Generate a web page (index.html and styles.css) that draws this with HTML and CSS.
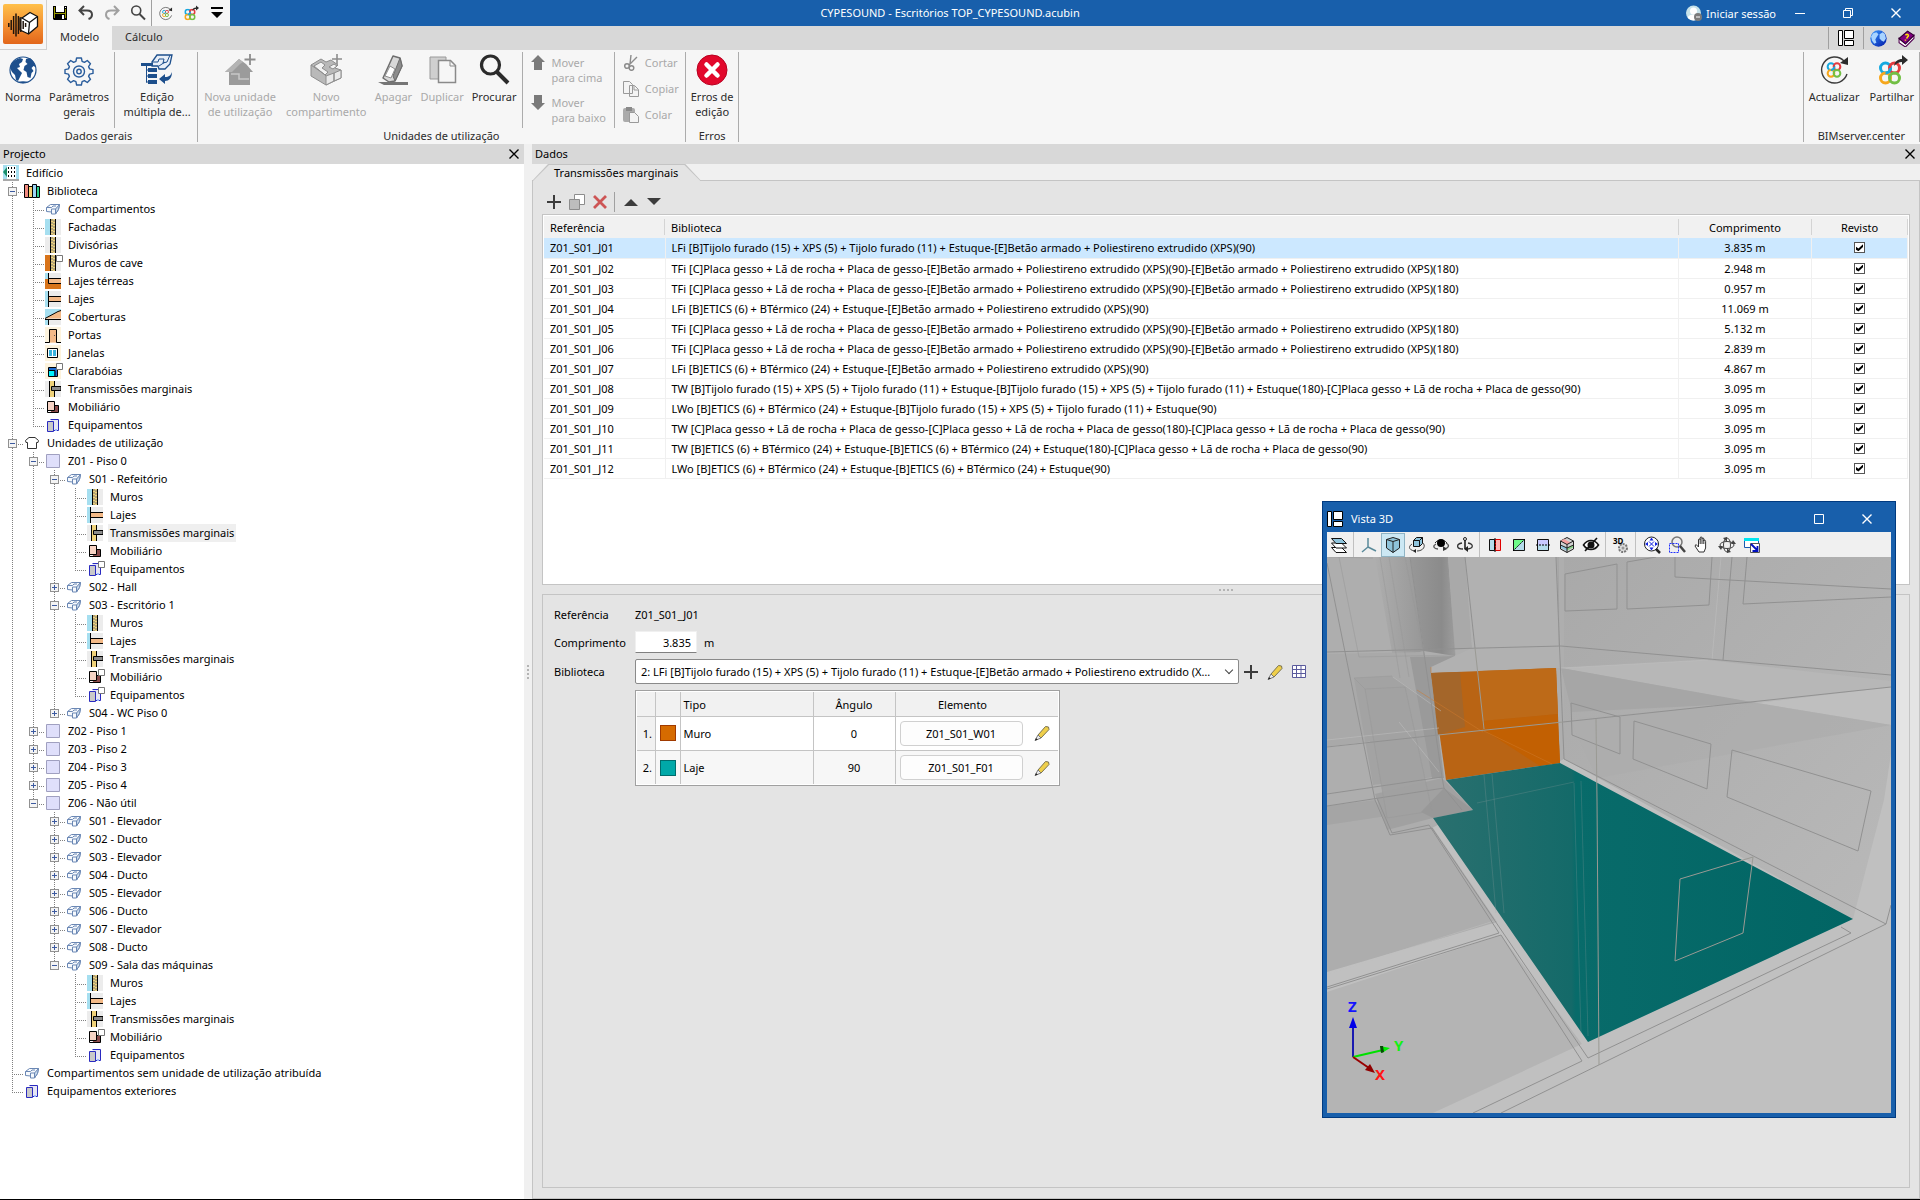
FILE: index.html
```html
<!DOCTYPE html>
<html lang="pt">
<head>
    <meta charset="UTF-8">
    <meta name="viewport" content="width=device-width, initial-scale=1.0">
    <title>CYPESOUND - Escritórios TOP_CYPESOUND.acubin</title>
    <link rel="stylesheet" href="styles.css">
</head>
<body>
    <!-- Icon sprite -->
    <svg class="sprite" aria-hidden="true">
        <defs>
            <linearGradient id="g-logo" x1="0" y1="0" x2="0" y2="1">
                <stop offset="0" stop-color="#ffc04a"/><stop offset=".5" stop-color="#f59333"/><stop offset="1" stop-color="#e2661a"/>
            </linearGradient>
            <linearGradient id="g-globe" x1="0" y1="0" x2="1" y2="1">
                <stop offset="0" stop-color="#3a9bff"/><stop offset="1" stop-color="#0018a8"/>
            </linearGradient>
        </defs>
        <symbol id="i-logo" viewBox="0 0 40 40">
            <rect width="40" height="40" rx="2" fill="url(#g-logo)"/>
            <path d="M19 14L27 8.500 34.500 12.500V22.500L25.500 30 17 26V14z" fill="#fff" stroke="#111" stroke-width="1.300" stroke-linejoin="round"/>
            <path d="M19 14l7.500 4.500 8-6M26.500 18.500l-1 11" fill="none" stroke="#111" stroke-width="1.300"/>
            <path d="M5.800 19v4M8.200 16v10M10.600 12v18M13 9.500v23M15.400 12v18M17.800 15v13M20.200 17v8M22.600 19v4" stroke="#20140c" stroke-width="1.500"/>
        </symbol>
        <symbol id="i-save" viewBox="0 0 14 14">
            <path d="M0 0h14v14H1l-1-1z" fill="#000"/><path d="M1 1h1v11H1zM12 3h1v9h-1zM2 7h10v1H2z" fill="#9a9a00"/>
            <path d="M3 0h8v6H3z" fill="#fff"/><path d="M12 1h1v1h-1z" fill="#fff"/><path d="M9 9h2v4H9z" fill="#fff"/>
        </symbol>
        <symbol id="i-undo" viewBox="0 0 16 16">
            <path d="M6 1L1.500 5.500 6 10M2 5.500h7c3.500 0 5 2 5 4.200 0 2-1.300 3.600-3.500 4.300" fill="none" stroke="currentColor" stroke-width="2"/>
        </symbol>
        <symbol id="i-search" viewBox="0 0 32 32">
            <circle cx="12.500" cy="11" r="9" fill="none" stroke="currentColor" stroke-width="3.200"/>
            <path d="M19 18l11 11" stroke="currentColor" stroke-width="4"/>
        </symbol>
        <symbol id="i-rings" viewBox="0 0 24 24">
            <g fill="none" stroke-width="3"><circle cx="7.500" cy="7" r="5" stroke="#16a9e0"/><circle cx="16.500" cy="7" r="5" stroke="#e23b3f"/>
            <circle cx="7.500" cy="17" r="5" stroke="#f6a71c"/><circle cx="16.500" cy="17" r="5" stroke="#72bf44"/>
            <path d="M7.500 12a5 5 0 0 0 5-5" stroke="#16a9e0"/></g>
        </symbol>
        <symbol id="i-update" viewBox="0 0 32 32">
            <path d="M29 20A13 13 0 1 1 26 7" fill="none" stroke="#3a3a3a" stroke-width="1.400"/>
            <path d="M22 9l8 2V3z" fill="#2b2b2b"/>
            <svg x="8" y="8" width="16" height="16"><use href="#i-rings"/></svg>
        </symbol>
        <symbol id="i-share" viewBox="0 0 32 32">
            <svg x="2" y="7" width="24" height="24"><use href="#i-rings"/></svg>
            <path d="M18 12c1-5 4-7 8-7V1l6 5-6 5V8c-3 0-5 1-8 4z" fill="#2b2b2b"/>
        </symbol>
        <symbol id="i-menu" viewBox="0 0 14 12"><path d="M1 0h12v2H1zM1 5h12l-6 6z" fill="#000"/></symbol>
        <symbol id="i-user" viewBox="0 0 16 16">
            <circle cx="7.500" cy="8" r="7.500" fill="#c6e2ea"/><circle cx="7.500" cy="6" r="3.500" fill="#fff"/><path d="M1.500 12.500c2-4 10-4 12 0-3 4-9 4-12 0z" fill="#fff"/>
            <circle cx="12" cy="12" r="4" fill="#7b7b7b"/><path d="M10 12h4" stroke="#fff"/>
        </symbol>
        <symbol id="i-min" viewBox="0 0 12 12"><path d="M1 6.500h10" stroke="currentColor"/></symbol>
        <symbol id="i-restore" viewBox="0 0 12 12"><path d="M1.500 3.500h7v7h-7zM3.500 3.500v-2h7v7h-2" fill="none" stroke="currentColor"/></symbol>
        <symbol id="i-max" viewBox="0 0 12 12"><path d="M1.500 1.500h9v9h-9z" fill="none" stroke="currentColor"/></symbol>
        <symbol id="i-close" viewBox="0 0 12 12"><path d="M1.500 1.500l9 9M10.500 1.500l-9 9" stroke="currentColor" stroke-width="1.400"/></symbol>
        <symbol id="i-layout" viewBox="0 0 16 16"><path d="M.5.500h4v15h-4zM6.500.500h9v8h-9zM6.500 10.500h9v5h-9z" fill="#fff" stroke="#000"/></symbol>
        <symbol id="i-globe" viewBox="0 0 16 16">
            <circle cx="8" cy="8" r="7.700" fill="url(#g-globe)"/>
            <path d="M1 6l2-3 3-1 2 2-2 3-1 2 1 3-2 1-2-3zM9 4l3-2 2 2 1 4-2 3-2-1-2-2z" fill="#a9d4ff"/>
        </symbol>
        <symbol id="i-book" viewBox="0 0 16 16">
            <path d="M1 8v4l6 4 8-8V5l-8 8z" fill="#fff" stroke="#500050"/><path d="M1 8l8-7 6 4-8 8z" fill="#800080" stroke="#300030"/>
            <path d="M7 5c2-2 4 0 2 1.500L8 8M7 9v1" fill="none" stroke="#ffe600" stroke-width="1.400"/>
        </symbol>
        <symbol id="i-world" viewBox="0 0 32 32">
            <circle cx="16" cy="16" r="13" fill="#fff" stroke="#1d4f8c" stroke-width="1.200"/>
            <path d="M4 11c2-4 5-6 9-7l3 1-1 3-3 2 1 3-3 1 3 3 2 2-2 4-2 4-2-1-1-5-3-3-2-4zM19 5l4-1c3 2 5 5 5.500 9l-2-1-2 2 2 3-2 2-1 5-3-1-1-5-3-2 1-4 3-2-2-2z" fill="#1d4f8c"/>
            <path d="M10 28c4-1 8-1 12 0-4 1.500-8 1.500-12 0z" fill="#1d4f8c"/>
        </symbol>
        <symbol id="i-gear" viewBox="0 0 32 32">
            <g fill="none" stroke="#2a5d9c" stroke-width="1.400">
                <path d="M13.600 4h4.800l.7 3.400 2.300 1 2.900-1.900 3.200 3.200-1.900 2.900 1 2.300 3.400.7v3.800l-3.400.7-1 2.300 1.900 2.900-3.200 3.200-2.900-1.900-2.300 1-.7 3.400h-4.800l-.7-3.400-2.300-1-2.900 1.900-3.200-3.200 1.900-2.900-1-2.300-3.400-.7v-3.800l3.400-.7 1-2.300-1.900-2.900 3.200-3.200 2.900 1.900 2.300-1z" stroke-linejoin="round"/>
                <circle cx="16" cy="17.500" r="5.500"/><circle cx="16" cy="17.500" r="2.200"/>
            </g>
        </symbol>
        <symbol id="i-multi" viewBox="0 0 32 32">
            <path d="M11 8l5-7h15l-2 9-5 5h-6l-1-3h-6z" fill="#e8eff8" stroke="#1d4f8c" stroke-width="1.300"/><path d="M11 8h6l1-3h5l-1 4 4-1 3-7M18 12l6-4" fill="none" stroke="#1d4f8c"/>
            <path d="M0 9h12v3H0zM7 14h9v4H7zM7 20h9v4H7zM7 26h9v4H7z" fill="#1d4f8c"/><path d="M5.500 12v16.500M5 16h3M5 22h3M5 28h3" fill="none" stroke="#1d4f8c"/>
            <path d="M18 25l6-5v3c4 0 6-2 7-5 0 6-3 9-7 9v3z" fill="#1d4f8c"/>
        </symbol>
        <symbol id="i-newunit" viewBox="0 0 32 32">
            <path d="M1 18L15 5l7 5 7 8h-3v13H5V18z" fill="#9b9b9b"/><path d="M1 18L15 5l4 3-3 2-8 8z" fill="#b4b4b4"/><path d="M7 20h8v5h10" fill="none" stroke="#c8c8c8" stroke-width="1.500"/><path d="M26 0v11M20.500 5.500h11" stroke="#8d8d8d" stroke-width="1.800"/>
        </symbol>
        <symbol id="i-newroom" viewBox="0 0 32 32">
            <g stroke="#8d8d8d" stroke-linejoin="round">
                <path d="M1 11l10-6 5 3 5-2 7 5-3 3 6 2v8l-15 7L1 22z" fill="#b9b9b9"/>
                <path d="M4 12l7-4 4 3-3 3 6 4-3 3zM19 13l5-3 3 2-4 3z" fill="#f2f2f2"/>
                <path d="M16 22l8-3v8l-8 4zM24 19l7-3v8l-7 3z" fill="#e9e9e9"/><path d="M1 11l13 9 2 2" fill="none"/><path d="M27 0v10M22 5h10" stroke-width="1.600"/>
            </g>
        </symbol>
        <symbol id="i-erase" viewBox="0 0 32 32">
            <path d="M16 2l7 2 2 8-7 15-6 1-6-4z" fill="#d9d9d9" stroke="#6e6e6e" stroke-width="1.500" stroke-linejoin="round"/><path d="M23 4l2 8-7 15-2-5z" fill="#8d8d8d" stroke="#6e6e6e"/>
            <path d="M8 22l5-10 5 3-4 9z" fill="#fff" stroke="#8d8d8d"/><path d="M1 28h30v3H7z" fill="#757575"/>
        </symbol>
        <symbol id="i-dup" viewBox="0 0 32 32">
            <path d="M4 3h16v22H4z" fill="#cfcfcf" stroke="#9a9a9a"/><path d="M12.500 6.500h12l5 5v17h-17z" fill="#f6f6f6" stroke="#8a8a8a" stroke-width="1.500"/><path d="M24 6v6h6" fill="none" stroke="#8a8a8a"/>
        </symbol>
        <symbol id="i-up" viewBox="0 0 14 16"><path d="M7 0l7 7h-3v8H3V7H0z" fill="#7a7a7a"/></symbol>
        <symbol id="i-down" viewBox="0 0 14 16"><path d="M7 15l7-7h-3V0H3v8H0z" fill="#7a7a7a"/></symbol>
        <symbol id="i-cut" viewBox="0 0 16 16">
            <path d="M8 0l-1 9M14 2L6 10" stroke="#8c8c8c" stroke-width="1.400"/><g fill="none" stroke="#8c8c8c" stroke-width="1.500"><circle cx="4" cy="11" r="2.300"/><circle cx="8.500" cy="13" r="2.300"/></g>
        </symbol>
        <symbol id="i-copy" viewBox="0 0 16 16"><path d="M.5.500h6l3 3v9h-9z M6.500 4.500h5l4 4v7h-9z" fill="#f4f4f4" stroke="#9a9a9a"/><path d="M11 5v4h4" fill="none" stroke="#9a9a9a"/></symbol>
        <symbol id="i-paste" viewBox="0 0 16 16"><rect y="1" width="12" height="14" rx="2" fill="#ababab"/><path d="M3 0h6v4H3z" fill="#8a8a8a"/><path d="M6.500 5.500h5l4 4v6h-9z" fill="#f4f4f4" stroke="#9a9a9a"/></symbol>
        <symbol id="i-error" viewBox="0 0 32 32"><circle cx="16" cy="16" r="15" fill="#e2082c" stroke="#b80020"/><path d="M10.500 10.500l11 11M21.500 10.500l-11 11" stroke="#fff" stroke-width="4.500" stroke-linecap="round"/></symbol>

        <!-- tree -->
        <symbol id="t-building" viewBox="0 0 16 16"><path d="M0 0h16v14H0z" fill="#a6dff0"/><path d="M0 14h16v2H0z" fill="#a9a9a9"/><path d="M4 1h9v13H4z" fill="#fff"/><path d="M5.500 2v12M8.500 2v12M11.500 2v12" stroke="#000" stroke-dasharray="2 2"/><path d="M4 2v10L0 7z" fill="#1a8f6a"/></symbol>
        <symbol id="t-books" viewBox="0 0 16 16"><g stroke="#000"><path d="M.5 1.500h4v13h-4z" fill="#f08a80"/><path d="M4.500 3.500h4v11h-4z" fill="#f7d070"/><path d="M8.500 1.500h4v13h-4z" fill="#9bd4f5"/><path d="M12.500 3.500h3v11h-3z" fill="#2ed08a"/></g></symbol>
        <symbol id="t-room" viewBox="0 0 16 16"><path d="M1.500 6.500l4-3h9l-1 5-3 4.500h-4V11l-5-.5z" fill="#f6f9fd" stroke="#6a87b4" stroke-linejoin="round"/><path d="M10.500 8l4-4.500-1 5-3 4.500z" fill="#c4d6ea" stroke="#6a87b4" stroke-linejoin="round"/><path d="M1.500 6.500h5l1.500-1.500h3M6.500 11V8h4" fill="none" stroke="#6a87b4"/></symbol>
        <symbol id="t-wall" viewBox="0 0 16 16"><path d="M0 0h16v16H0z" fill="#ececec"/><path d="M0 0h5v16H0z" fill="#a6dff0"/><path d="M5 0h6v16H5z" fill="#000"/><path d="M6 0h4v16H6z" fill="#efd27a"/><path d="M7 0v16M9 1v15" stroke="#777" stroke-dasharray="2 1"/></symbol>
        <symbol id="t-part" viewBox="0 0 16 16"><path d="M0 0h16v16H0z" fill="#ececec"/><path d="M5 0h6v16H5z" fill="#000"/><path d="M6 0h4v16H6z" fill="#efd27a"/><path d="M7 0v16M9 1v15" stroke="#777" stroke-dasharray="2 1"/></symbol>
        <symbol id="t-cave" viewBox="0 0 18 16"><path d="M0 0h16v16H0z" fill="#ececec"/><path d="M0 0h5v16H0z" fill="#d8741a"/><path d="M5 0h6v16H5z" fill="#000"/><path d="M6 0h4v16H6z" fill="#efd27a"/><path d="M7 0v16M9 1v15" stroke="#777" stroke-dasharray="2 1"/><path d="M11.500.500h6v6h-6z" fill="#fff" stroke="#777"/></symbol>
        <symbol id="t-ground" viewBox="0 0 16 16"><path d="M0 0h16v16H0z" fill="#d8741a"/><path d="M0 0h4v6H0z" fill="#a6dff0"/><path d="M4 0h12v6H4z" fill="#ececec"/><path d="M3.500 0v10.500H16M4 5.500h12" fill="none" stroke="#000"/><path d="M4 6h12v4H4z" fill="#f3b987"/></symbol>
        <symbol id="t-slab" viewBox="0 0 16 16"><path d="M0 0h16v16H0z" fill="#ececec"/><path d="M0 0h3v16H0z" fill="#a6dff0"/><path d="M3.500 0v16M4 5.500h12M4 10.500h12" stroke="#000"/><path d="M4 6h12v4H4z" fill="#f3b987"/></symbol>
        <symbol id="t-roof" viewBox="0 0 16 16"><path d="M0 0h16v16H0z" fill="#ececec"/><path d="M0 0h16v2L0 9.500V16h3v-6H0z" fill="#a6dff0"/><path d="M0 9.500L13 2.500l3-1v8z" fill="#f3b987"/><path d="M0 9.500L13 2.500l3-1M0 10.500h16M3.500 10v6" fill="none" stroke="#000"/></symbol>
        <symbol id="t-door" viewBox="0 0 16 16"><path d="M0 0h16v16H0z" fill="#fdf3dd"/><path d="M0 15.500h4.500v-13h7v13H16" fill="#f3b987" stroke="#000"/><path d="M9 8h1v1H9z" fill="#555"/></symbol>
        <symbol id="t-window" viewBox="0 0 16 16"><path d="M0 0h16v16H0z" fill="#fdf3dd"/><path d="M2.500 3.500h10v9h-10z" fill="#fff" stroke="#000"/><path d="M4 5h3v6H4zM8 5h3v6H8z" fill="#3cb4dc"/></symbol>
        <symbol id="t-sky" viewBox="0 0 18 16"><path d="M0 0h16v16H0z" fill="#fdf3dd"/><path d="M3.500 4.500h9v9h-9z" fill="#1b6ad0" stroke="#000"/><path d="M4 8h5v5H4z" fill="#00f2ff"/><path d="M3 7.500h7v6" fill="none" stroke="#000"/><path d="M11.500.500h6v6h-6z" fill="#fff" stroke="#777"/></symbol>
        <symbol id="t-joint" viewBox="0 0 16 16"><path d="M0 0h16v16H0z" fill="#ececec"/><path d="M5 0h4v16H5z" fill="#efd27a"/><path d="M4.500 0v16M9.500 0v16" stroke="#000"/><path d="M6.500 5.500H16v4H6.500z" fill="#8c8c8c" stroke="#000"/></symbol>
        <symbol id="t-furn" viewBox="0 0 18 16"><path d="M8.500 6.500h5v7h-8" fill="#8a4a4a" stroke="#000"/><path d="M2.500 2.500h7v9h-7z" fill="#f7d3c4" stroke="#000"/><path d="M2.500 11v2.500h4" fill="none" stroke="#000"/></symbol>
        <symbol id="t-furn2" viewBox="0 0 18 16"><use href="#t-furn" width="18" height="16"/><path d="M11.500.500h6v6h-6z" fill="#fff" stroke="#777"/></symbol>
        <symbol id="t-equip" viewBox="0 0 18 16"><path d="M5.500 2.500h8v11h-5" fill="#e6e6f4" stroke="#2a2ac0"/><path d="M2.500 4.500h6v10h-6z" fill="#c9c9c9" stroke="#2a2ac0"/><path d="M10 12h2v2h-2z" fill="#9ab8ff"/></symbol>
        <symbol id="t-equip2" viewBox="0 0 18 16"><use href="#t-equip" width="18" height="16"/><path d="M11.500.500h6v6h-6z" fill="#fff" stroke="#777"/></symbol>
        <symbol id="t-house" viewBox="0 0 16 16"><path d="M1.500 5.500L5 2.500h6l3.500 3-.5 2h-1.500v6h-9v-6H2z" fill="#fff" stroke="#333"/></symbol>
        <symbol id="t-zone" viewBox="0 0 16 16"><path d="M1.500 1.500h13v13h-13z" fill="#dfdffb" stroke="#a0a0c0"/></symbol>

        <!-- data toolbar -->
        <symbol id="i-plus" viewBox="0 0 16 16"><path d="M8 1v14M1 8h14" stroke="#3c3c3c" stroke-width="2"/></symbol>
        <symbol id="i-clone" viewBox="0 0 16 16"><path d="M5.500.500h10v10h-10z" fill="#fff" stroke="#8c8c8c"/><path d="M.5 5.500h10v10H.5z" fill="#bdbdbd" stroke="#8c8c8c"/></symbol>
        <symbol id="i-del" viewBox="0 0 16 16"><path d="M2 2l12 12M14 2L2 14" stroke="#cd5555" stroke-width="2.800"/></symbol>
        <symbol id="i-tri-up" viewBox="0 0 14 8"><path d="M0 8l7-7 7 7z" fill="#3c3c3c"/></symbol>
        <symbol id="i-tri-down" viewBox="0 0 14 8"><path d="M0 0l7 7 7-7z" fill="#3c3c3c"/></symbol>
        <symbol id="i-pencil" viewBox="0 0 16 16"><path d="M4 10l7.500-8.500 3 .5.500 2.500L7 13z" fill="#efcf4a" stroke="#7a7350"/><path d="M4 10L1 15.500 7 13z" fill="#eee" stroke="#777"/><path d="M1 15.500l1-2.500 1.800 1.800z" fill="#222"/></symbol>
        <symbol id="i-grid" viewBox="0 0 16 16"><path d="M1.500 1.500h13v12h-13zM1.500 5.500h13M1.500 9.500h13M5.500 1.500v12M10 1.500v12" fill="#fff" stroke="#5a5a9c"/></symbol>

        <!-- 3D view toolbar -->
        <symbol id="v-layers" viewBox="0 0 18 18"><g stroke="#111" stroke-linejoin="round"><path d="M1.500 11.500h10l5 5H6z" fill="#fff"/><path d="M1.500 7h10l5 5H6z" fill="#fff"/><path d="M1.500 2.500h10l5 5H6z" fill="#8fc4dc"/></g></symbol>
        <symbol id="v-axes" viewBox="0 0 18 18"><path d="M8 2v9l-6 5M8 11l8 4" fill="none" stroke="#5a8a9a" stroke-width="1.500"/></symbol>
        <symbol id="v-cube" viewBox="0 0 18 18"><path d="M2.500 3.500L9 1.500l6.500 2v8.500L9 16.500 2.500 12z" fill="#8ec3da" stroke="#222"/><path d="M2.500 3.500L9 5.500l6.500-2M9 5.500v11" fill="none" stroke="#222"/></symbol>
        <symbol id="v-orbit" viewBox="0 0 18 18"><path d="M4 8c-5 3-2 7 4 7M14 6c5 4 1 9-5 9" fill="none" stroke="#444"/><path d="M5.500 4.500l3-3h6v6l-3 3h-6z" fill="#8fc4dc" stroke="#111"/><path d="M5.500 4.500h6v6M11.500 4.500l3-3" fill="none" stroke="#111"/><path d="M8 13v4l-3-2z" fill="#222"/></symbol>
        <symbol id="v-eye" viewBox="0 0 18 18"><path d="M3 7c3-4 9-4 12 0" fill="none" stroke="#222"/><circle cx="9" cy="7" r="4" fill="#000"/><path d="M4 8c-4 2-2 5 2 5M14 7c4 2 3 5-2 6" fill="none" stroke="#555" stroke-width="1.300"/><path d="M11 10l4 3-4 2z" fill="#333"/></symbol>
        <symbol id="v-turn" viewBox="0 0 18 18"><path d="M9 4v9" stroke="#222" stroke-width="1.600"/><circle cx="9" cy="3" r="1.500" fill="none" stroke="#222"/><path d="M6 7c-6 1-6 6 1 6M12 7c6 1 6 6-2 6" fill="none" stroke="#333" stroke-width="1.300"/><path d="M12 10v6l-4-3z" fill="#222"/></symbol>
        <symbol id="v-clipx" viewBox="0 0 18 18"><path d="M3.500 3.500h5v11h-5z" fill="#b5dcec" stroke="#111"/><path d="M9.500 3.500h5v11h-5z" fill="#ffb4b4" stroke="#e00000"/><path d="M9 2v14" stroke="#000" stroke-dasharray="2 1"/></symbol>
        <symbol id="v-clipy" viewBox="0 0 18 18"><path d="M3 3h12v12H3z" fill="#6dfc8a"/><path d="M15 3v12H3z" fill="#b5dcec"/><path d="M3.500 3.500h11v11h-11z" fill="none" stroke="#111"/><path d="M3 15L15 3" stroke="#000" stroke-dasharray="2 1"/></symbol>
        <symbol id="v-clipz" viewBox="0 0 18 18"><path d="M3.500 3.500h11v11h-11z" fill="#c9c9ff" stroke="#111"/><path d="M4 9h10v5H4z" fill="#b5dcec"/><path d="M2 9h14" stroke="#000" stroke-dasharray="2 1"/></symbol>
        <symbol id="v-block" viewBox="0 0 18 18"><path d="M2.500 5L9 1.500 15.500 5v8L9 16.500 2.500 13z" fill="#d2d2d2" stroke="#222"/><path d="M6 3l6.500 3.500L9 8.500 2.500 5z" fill="#f5a0a0"/><path d="M9 12l6-3v2.500l-6 3z" fill="#85d085"/><path d="M3 9l6 3v3L3 12z" fill="#8fc4dc"/><path d="M9 8.500v8M2.500 5L9 8.500 15.500 5M2.500 9L9 12l6.500-3" fill="none" stroke="#222"/></symbol>
        <symbol id="v-hide" viewBox="0 0 18 18"><path d="M1.500 9c4-6 11-6 15 0-4 6-11 6-15 0z" fill="#fff" stroke="#111" stroke-width="1.600"/><circle cx="9" cy="9" r="3.500" fill="#111"/><path d="M3 15L15 2" stroke="#111" stroke-width="1.600"/></symbol>
        <symbol id="v-extents" viewBox="0 0 18 18"><circle cx="8.500" cy="8" r="7" fill="#fff" stroke="#222"/><path d="M13 13l4 4" stroke="#222" stroke-width="2.500"/><path d="M8.500 1.500l2 3h-4zM8.500 14.500l2-3h-4zM2 8l3-2v4zM15 8l-3-2v4z" fill="#1020e0"/><path d="M6 5.500l5 5M11 5.500l-5 5" stroke="#1020e0"/></symbol>
        <symbol id="v-zoom" viewBox="0 0 18 18"><circle cx="9" cy="6" r="5" fill="#eee" stroke="#777" stroke-width="1.500"/><path d="M12 10l5 6" stroke="#444" stroke-width="2.500"/><path d="M1.500 7.500h9v9h-9z" fill="none" stroke="#2030ff" stroke-dasharray="2 1"/></symbol>
        <symbol id="v-pan" viewBox="0 0 18 18"><path d="M6 16l-4-6 1-1.500L5.500 11V4c0-1.500 1.700-1.500 1.700 0V2c0-1.500 1.800-1.500 1.800 0v1c0-1.500 1.800-1.500 1.800 0v2c0-1.500 1.800-1.200 1.800.3V12l-1.600 4z" fill="#fff" stroke="#333"/><path d="M7.200 4v4M9 3v5M10.800 4v4" stroke="#333"/></symbol>
        <symbol id="v-move" viewBox="0 0 18 18"><g fill="none" stroke="#444"><ellipse cx="9" cy="9" rx="3.500" ry="7"/><ellipse cx="9" cy="9" rx="7" ry="3.500"/></g><path d="M5 2l4-1v5zM13 16l-4 1v-5zM0 10h5l-2 4zM18 8h-5l2-4z" fill="#444"/></symbol>
        <symbol id="v-window" viewBox="0 0 18 18"><path d="M1.500 2.500h14v9h-14z" fill="#fff" stroke="#1b5ab0"/><path d="M1 2h15v3H1z" fill="#00e5f0"/><path d="M7.500 7.500h9v9h-9z" fill="#fff" stroke="#555"/><path d="M8 8l6 6M14.500 10v5h-5" fill="none" stroke="#0010c0" stroke-width="1.800"/></symbol>
    </svg>

    <header class="top">
        <button class="logo" aria-label="CYPESOUND"><svg width="40" height="40"><use href="#i-logo"/></svg></button>
        <div class="titlebar">
            <div class="quick">
                <button aria-label="Guardar"><svg width="14" height="14"><use href="#i-save"/></svg></button>
                <button aria-label="Desfazer"><svg width="16" height="16"><use href="#i-undo"/></svg></button>
                <button aria-label="Refazer" class="redo" disabled><svg width="16" height="16"><use href="#i-undo"/></svg></button>
                <button aria-label="Procurar"><svg width="16" height="16"><use href="#i-search"/></svg></button>
                <span class="vline"></span>
                <button aria-label="Actualizar"><svg width="15" height="15"><use href="#i-update"/></svg></button>
                <button aria-label="Partilhar"><svg width="16" height="16"><use href="#i-share"/></svg></button>
                <button aria-label="Personalizar"><svg width="14" height="12"><use href="#i-menu"/></svg></button>
            </div>
            <h1 class="title">CYPESOUND - Escritórios TOP_CYPESOUND.acubin</h1>
            <button class="session"><svg width="16" height="16"><use href="#i-user"/></svg>Iniciar sessão</button>
            <div class="winbtns">
                <button aria-label="Minimizar"><svg width="12" height="12"><use href="#i-min"/></svg></button>
                <button aria-label="Restaurar"><svg width="12" height="12"><use href="#i-restore"/></svg></button>
                <button aria-label="Fechar"><svg width="12" height="12"><use href="#i-close"/></svg></button>
            </div>
        </div>
        <nav class="tabs">
            <a href="#" class="active">Modelo</a>
            <a href="#">Cálculo</a>
            <div class="tools">
                <button aria-label="Janelas"><svg width="16" height="16"><use href="#i-layout"/></svg></button>
                <button aria-label="Web"><svg width="17" height="17"><use href="#i-globe"/></svg></button>
                <button aria-label="Ajuda"><svg width="17" height="17"><use href="#i-book"/></svg></button>
            </div>
        </nav>
    </header>

    <section class="ribbon">
        <div class="group">
            <div class="items">
                <button class="big"><svg><use href="#i-world"/></svg>Norma</button>
                <button class="big"><svg><use href="#i-gear"/></svg>Parâmetros<br>gerais</button>
                <span class="rule"></span>
                <button class="big wide"><svg><use href="#i-multi"/></svg>Edição<br>múltipla de...</button>
            </div>
            <p>Dados gerais</p>
        </div>
        <div class="group units">
            <div class="items">
                <button class="big wide" disabled><svg><use href="#i-newunit"/></svg>Nova unidade<br>de utilização</button>
                <button class="big wide" disabled><svg><use href="#i-newroom"/></svg>Novo<br>compartimento</button>
                <button class="big" disabled><svg><use href="#i-erase"/></svg>Apagar</button>
                <button class="big" disabled><svg><use href="#i-dup"/></svg>Duplicar</button>
                <button class="big"><svg><use href="#i-search"/></svg>Procurar</button>
                <span class="rule"></span>
                <div class="stack">
                    <button class="small" disabled><svg width="14" height="16"><use href="#i-up"/></svg><span>Mover<br>para cima</span></button>
                    <button class="small" disabled><svg width="14" height="16"><use href="#i-down"/></svg><span>Mover<br>para baixo</span></button>
                </div>
                <span class="rule"></span>
                <div class="stack">
                    <button class="small" disabled><svg width="16" height="16"><use href="#i-cut"/></svg>Cortar</button>
                    <button class="small" disabled><svg width="16" height="16"><use href="#i-copy"/></svg>Copiar</button>
                    <button class="small" disabled><svg width="16" height="16"><use href="#i-paste"/></svg>Colar</button>
                </div>
            </div>
            <p>Unidades de utilização</p>
        </div>
        <div class="group roomy">
            <div class="items">
                <button class="big"><svg><use href="#i-error"/></svg>Erros de<br>edição</button>
            </div>
            <p>Erros</p>
        </div>
        <div class="group roomy last">
            <div class="items">
                <button class="big"><svg><use href="#i-update"/></svg>Actualizar</button>
                <button class="big"><svg><use href="#i-share"/></svg>Partilhar</button>
            </div>
            <p>BIMserver.center</p>
        </div>
    </section>

    <main class="work">
        <aside class="project">
            <div class="dock-head"><h2>Projecto</h2><button aria-label="Fechar"><svg width="12" height="12"><use href="#i-close"/></svg></button></div>
            <div class="tree" id="tree"></div>
        </aside>
        <div class="vsplit"><i></i><i></i><i></i><i></i></div>
        <section class="data">
            <div class="dock-head"><h2>Dados</h2><button aria-label="Fechar"><svg width="12" height="12"><use href="#i-close"/></svg></button></div>
            <div class="tabstrip"><span class="tab">Transmissões marginais</span></div>
            <div class="data-body">
                <div class="toolbar">
                    <button aria-label="Adicionar"><svg width="16" height="16"><use href="#i-plus"/></svg></button>
                    <button aria-label="Copiar"><svg width="16" height="16"><use href="#i-clone"/></svg></button>
                    <button aria-label="Apagar"><svg width="16" height="16"><use href="#i-del"/></svg></button>
                    <span class="vline"></span>
                    <button aria-label="Subir"><svg width="14" height="8"><use href="#i-tri-up"/></svg></button>
                    <button aria-label="Descer"><svg width="14" height="8"><use href="#i-tri-down"/></svg></button>
                </div>
                <div class="list">
                    <table>
                        <colgroup><col class="c-ref"><col><col class="c-len"><col class="c-rev"></colgroup>
                        <thead><tr><th>Referência</th><th>Biblioteca</th><th>Comprimento</th><th>Revisto</th></tr></thead>
                        <tbody id="joints"></tbody>
                    </table>
                </div>
                <div class="hsplit"><i></i><i></i><i></i><i></i></div>
                <form class="detail">
                    <span>Referência</span>
                    <div class="field">Z01_S01_J01</div>
                    <label for="length">Comprimento</label>
                    <div class="field"><input id="length" type="text" value="3.835"><span class="unit">m</span></div>
                    <label for="lib">Biblioteca</label>
                    <div class="field">
                        <span class="combo"><select id="lib"><option>2: LFi [B]Tijolo furado (15) + XPS (5) + Tijolo furado (11) + Estuque-[E]Betão armado + Poliestireno extrudido (XPS)(90)</option></select></span>
                        <button type="button" aria-label="Adicionar"><svg width="16" height="16"><use href="#i-plus"/></svg></button>
                        <button type="button" aria-label="Editar"><svg width="16" height="16"><use href="#i-pencil"/></svg></button>
                        <button type="button" aria-label="Tabela"><svg width="16" height="16"><use href="#i-grid"/></svg></button>
                    </div>
                    <div class="elements">
                        <table>
                            <thead><tr><th></th><th></th><th class="left">Tipo</th><th>Ângulo</th><th>Elemento</th></tr></thead>
                            <tbody>
                                <tr><td class="num">1.</td><td class="sw"><span class="swatch wall"></span></td><td class="type">Muro</td><td class="angle">0</td><td><div class="pick"><button type="button" class="elem">Z01_S01_W01</button><button type="button" aria-label="Editar"><svg width="16" height="16"><use href="#i-pencil"/></svg></button></div></td></tr>
                                <tr><td class="num">2.</td><td class="sw"><span class="swatch slab"></span></td><td class="type">Laje</td><td class="angle">90</td><td><div class="pick"><button type="button" class="elem">Z01_S01_F01</button><button type="button" aria-label="Editar"><svg width="16" height="16"><use href="#i-pencil"/></svg></button></div></td></tr>
                            </tbody>
                        </table>
                    </div>
                </form>
            </div>
        </section>
    </main>

    <!-- Floating 3D view -->
    <section class="view3d">
        <div class="view-title">
            <svg width="16" height="16"><use href="#i-layout"/></svg>
            <h2>Vista 3D</h2>
            <button aria-label="Maximizar"><svg width="12" height="12"><use href="#i-max"/></svg></button>
            <button aria-label="Fechar"><svg width="12" height="12"><use href="#i-close"/></svg></button>
        </div>
        <div class="view-tools">
            <button aria-label="Camadas"><svg><use href="#v-layers"/></svg></button>
            <span class="vline"></span>
            <button aria-label="Eixos"><svg><use href="#v-axes"/></svg></button>
            <button aria-label="Perspectiva" class="on"><svg><use href="#v-cube"/></svg></button>
            <button aria-label="Orbitar"><svg><use href="#v-orbit"/></svg></button>
            <button aria-label="Olhar"><svg><use href="#v-eye"/></svg></button>
            <button aria-label="Rodar"><svg><use href="#v-turn"/></svg></button>
            <span class="vline"></span>
            <button aria-label="Corte X"><svg><use href="#v-clipx"/></svg></button>
            <button aria-label="Corte Y"><svg><use href="#v-clipy"/></svg></button>
            <button aria-label="Corte Z"><svg><use href="#v-clipz"/></svg></button>
            <button aria-label="Caixa"><svg><use href="#v-block"/></svg></button>
            <button aria-label="Ocultar"><svg><use href="#v-hide"/></svg></button>
            <span class="vline"></span>
            <button aria-label="Opções 3D"><svg viewBox="0 0 18 18"><circle cx="11" cy="12" r="4" fill="#ddd" stroke="#777" stroke-width="2" stroke-dasharray="2 1"/><circle cx="11" cy="12" r="1.500" fill="#999"/><text class="tag" x="1" y="8">3D</text></svg></button>
            <span class="vline"></span>
            <button class="nav" aria-label="Ver tudo"><svg><use href="#v-extents"/></svg></button>
            <button class="nav" aria-label="Zoom"><svg><use href="#v-zoom"/></svg></button>
            <button class="nav" aria-label="Mover"><svg><use href="#v-pan"/></svg></button>
            <button class="nav" aria-label="Rotação"><svg><use href="#v-move"/></svg></button>
            <button class="nav" aria-label="Janela"><svg><use href="#v-window"/></svg></button>
        </div>
        <svg class="scene" viewBox="0 0 564 556" preserveAspectRatio="xMidYMid slice">
            <defs>
                <linearGradient id="g-back" x1="0" y1="0" x2="1" y2="1"><stop offset="0" stop-color="#a9a9a9"/><stop offset="1" stop-color="#b9b9b9"/></linearGradient>
                <linearGradient id="g-teal" x1="0" y1="0" x2="1" y2="0"><stop offset="0" stop-color="#2a706f"/><stop offset=".33" stop-color="#146a69"/><stop offset=".34" stop-color="#086b6a"/><stop offset="1" stop-color="#016564"/></linearGradient>
                <linearGradient id="g-dark" x1="0" y1="0" x2="1" y2="0"><stop offset="0" stop-color="#989898"/><stop offset=".7" stop-color="#8b8b8b"/><stop offset="1" stop-color="#9c9c9c"/></linearGradient>
                <linearGradient id="g-side" x1="0" y1="0" x2="1" y2="0"><stop offset="0" stop-color="#adadad"/><stop offset="1" stop-color="#979797"/></linearGradient>
            </defs>
            <rect width="564" height="556" fill="#c0c0c0"/>
            <path d="M0 0h237v202L105 271 0 300z" fill="#aeaeae"/>
            <path d="M237 0h327v197L557 243 526 362 237 202z" fill="url(#g-back)"/>
            <path d="M0 268L60 258 104 268 170 365 0 415z" fill="#adadad"/>
            <path d="M0 435L174 378 255 487 106 556H0z" fill="#b4b4b4"/>
            <path d="M0 249l48-6 12 16-60 9z" fill="#a5a5a5"/>
            <path d="M48 0h35l14 94-31 7z" fill="url(#g-side)"/>
            <path d="M83 0h38l7 99-31-5z" fill="url(#g-dark)"/>
            <path d="M121 0h17l7 91-17 2z" fill="#a9a9a9"/>
            <path d="M138 0h91l5 89-89 2z" fill="#b1b1b1"/>
            <path d="M0 97l97-2 7 21 4 63L0 190z" fill="#a9a9a9"/>
            <path d="M27 121l38-2 32 22 10 79-61 8z" fill="#a3a3a3"/>
            <path d="M83 100l45-1 2 18-26 0 13 104-12 0z" fill="#9a9a9a"/>
            <path d="M38 132l40-2 27 124-45 7z" fill="#a2a2a2"/>
            <path d="M48 237l67-16 31 32-40 8-46 12z" fill="#a1a1a1"/>
            <path d="M117 231l29 22-40 8-12-6z" fill="#989898"/>
            <path d="M145 91l89-2v22l-130 5v-6z" fill="#b1b1b1"/>
            <path d="M234 111L381 103 564 124v7L430 146z" fill="#b7b7b7"/>
            <path d="M234 111L430 146 245 155z" fill="#a6a6a6"/>
            <path d="M430 146L564 130V168z" fill="#bfbfbf"/>
            <path d="M243 162L430 146 564 168 270 221z" fill="#acacac" fill-opacity=".7"/>
            <path d="M104 116L229 111 233 206 119 223z" fill="#b96414"/>
            <path d="M104 116l29-1 5 55-27 8z" fill="#a4662a"/>
            <path d="M151 114L229 111 231 157 155 164z" fill="#bd6a18"/>
            <path d="M155 164l76-7 0 8-74 8z" fill="#c06207"/>
            <path d="M157 173L231 165 233 206 213 209z" fill="#c26002"/>
            <path d="M233 206L526 362 261 485 106 261 146 253 119 223z" fill="url(#g-teal)"/>
            <g fill="none" stroke="#c2c2c2" stroke-opacity=".5">
                <path d="M66 120l48 34M0 183l112-12M385 103L394 0M0 417l170-54M72 165l40 50M43 185L0 190M234 111L381 103"/>
            </g>
            <path d="M90 133L156 175M155 173L225 207M104 116L104 110" fill="none" stroke="#d07a2a" stroke-opacity=".5"/>
            <g fill="none" stroke="#919191">
                <path d="M0 95L234 89 564 118M0 6L18 95 48 243M83 0l32 220M138 0l10 91M229 0l8 202M405 0l-9 103"/>
                <path d="M238 17L290 7V52L238 54zM300 5L329 0M385 0L382 48 300 52V5M348 0V20L564 32M420 0L416 47 564 40"/>
                <path d="M0 190L111 178M236 165L564 130M244 146L293 160V197L245 178zM307 164L384 187 380 232 306 202zM405 193L544 234 531 294 400 240z"/>
                <path d="M237 202L559 367 174 556M559 367L564 348M514 370L524 376 261 501 105 271 63 278 48 243M102 268L65 276 50 241"/>
                <path d="M146 556L255 504 174 378 0 432M172 376L0 430M172 376L102 268M0 237L115 220M0 249L117 231 135 253M115 220L117 231"/>
            </g>
            <g fill="none" stroke="#989898" stroke-opacity=".5">
                <path d="M12 0L32 100 128 98M62 0l20 120M97 98L78 0M120 0l8 98M27 121l38-2M27 121l11 11 40-2 27 124M38 132l22 129 45-7M53 0l20 121M46 1L2 0M231 0l1 89"/>
            </g>
            <g fill="none" stroke="#93a09f" stroke-opacity=".25">
                <path d="M157 218l12 138M165 217l12 139M247 226l7 250M254 224l7 255M150 246l97-21"/>
            </g>
            <path d="M148 91l9 81M111 178L236 165M353 322L426 300 416 376 348 404zM269 162L270 243 272 508" fill="none" stroke="#9a9a94"/>
            <g class="axes">
                <path d="M26 500V468" stroke="#1a1ab0" stroke-width="2"/><path d="M26 460l4 11h-8z" fill="#0000e8"/>
                <path d="M26 500l30-7" stroke="#00e000" stroke-width="2"/><path d="M63 491l-10-2 2 7z" fill="#00f000"/><path d="M53 489l3 0 1 6-3 1z" fill="#064a06"/>
                <path d="M26 500l16 11" stroke="#900" stroke-width="2"/><path d="M48 516l-10-3 5-6z" fill="#900000"/>
                <text x="21" y="455" fill="#1414ff">Z</text><text x="67" y="494" fill="#14f014">Y</text><text x="48" y="523" fill="#ff1414">X</text>
            </g>
        </svg>
    </section>

    <script>
        // [label, icon, children, state]; state: 'closed' draws a plus box
        const room = (label, ...kids) => [label, 'room', kids.length ? kids : null, kids.length ? '' : 'closed'];
        const roomItems = (furn, equip, selected) => [
            ['Muros', 'wall'],
            ['Lajes', 'slab'],
            ['Transmissões marginais', 'joint', null, selected ? 'selected' : ''],
            ['Mobiliário', furn],
            ['Equipamentos', equip]
        ];
        const floor = (label) => [label, 'zone', null, 'closed'];

        const treeData = [
            ['Biblioteca', 'books', [
                ['Compartimentos', 'room'],
                ['Fachadas', 'wall'],
                ['Divisórias', 'part'],
                ['Muros de cave', 'cave'],
                ['Lajes térreas', 'ground'],
                ['Lajes', 'slab'],
                ['Coberturas', 'roof'],
                ['Portas', 'door'],
                ['Janelas', 'window'],
                ['Clarabóias', 'sky'],
                ['Transmissões marginais', 'joint'],
                ['Mobiliário', 'furn'],
                ['Equipamentos', 'equip']
            ]],
            ['Unidades de utilização', 'house', [
                ['Z01 - Piso 0', 'zone', [
                    room('S01 - Refeitório', ...roomItems('furn', 'equip2', true)),
                    room('S02 - Hall'),
                    room('S03 - Escritório 1', ...roomItems('furn2', 'equip2')),
                    room('S04 - WC Piso 0')
                ]],
                floor('Z02 - Piso 1'),
                floor('Z03 - Piso 2'),
                floor('Z04 - Piso 3'),
                floor('Z05 - Piso 4'),
                ['Z06 - Não útil', 'zone', [
                    room('S01 - Elevador'),
                    room('S02 - Ducto'),
                    room('S03 - Elevador'),
                    room('S04 - Ducto'),
                    room('S05 - Elevador'),
                    room('S06 - Ducto'),
                    room('S07 - Elevador'),
                    room('S08 - Ducto'),
                    room('S09 - Sala das máquinas', ...roomItems('furn2', 'equip'))
                ]]
            ]],
            ['Compartimentos sem unidade de utilização atribuída', 'room'],
            ['Equipamentos exteriores', 'equip']
        ];

        function icon(name) {
            const wide = ['cave', 'sky', 'furn', 'furn2', 'equip', 'equip2'].includes(name);
            return `<svg class="ticon" width="${wide ? 18 : 16}" height="16"><use href="#t-${name}"/></svg>`;
        }

        function renderNodes(nodes) {
            return '<ul>' + nodes.map(([label, ico, kids, state]) => {
                let box = '';
                if (kids) box = '<button class="expander" aria-label="Recolher"></button>';
                if (state === 'closed') box = '<button class="expander plus" aria-label="Expandir"></button>';
                return `<li><div class="row"><span class="branch">${box}</span>${icon(ico)}<a href="#" class="${state === 'selected' ? 'selected' : ''}">${label}</a></div>${kids ? renderNodes(kids) : ''}</li>`;
            }).join('') + '</ul>';
        }

        document.getElementById('tree').innerHTML =
            `<div class="row root">${icon('building')}<a href="#">Edifício</a></div>` + renderNodes(treeData);

        const tf = 'TFi [C]Placa gesso + Lã de rocha + Placa de gesso-[E]Betão armado + Poliestireno extrudido (XPS)(90)-[E]Betão armado + Poliestireno extrudido (XPS)(180)';
        const lf = 'LFi [B]ETICS (6) + BTérmico (24) + Estuque-[E]Betão armado + Poliestireno extrudido (XPS)(90)';
        const joints = [
            ['LFi [B]Tijolo furado (15) + XPS (5) + Tijolo furado (11) + Estuque-[E]Betão armado + Poliestireno extrudido (XPS)(90)', '3.835'],
            [tf, '2.948'],
            [tf, '0.957'],
            [lf, '11.069'],
            [tf, '5.132'],
            [tf, '2.839'],
            [lf, '4.867'],
            ['TW [B]Tijolo furado (15) + XPS (5) + Tijolo furado (11) + Estuque-[B]Tijolo furado (15) + XPS (5) + Tijolo furado (11) + Estuque(180)-[C]Placa gesso + Lã de rocha + Placa de gesso(90)', '3.095'],
            ['LWo [B]ETICS (6) + BTérmico (24) + Estuque-[B]Tijolo furado (15) + XPS (5) + Tijolo furado (11) + Estuque(90)', '3.095'],
            ['TW [C]Placa gesso + Lã de rocha + Placa de gesso-[C]Placa gesso + Lã de rocha + Placa de gesso(180)-[C]Placa gesso + Lã de rocha + Placa de gesso(90)', '3.095'],
            ['TW [B]ETICS (6) + BTérmico (24) + Estuque-[B]ETICS (6) + BTérmico (24) + Estuque(180)-[C]Placa gesso + Lã de rocha + Placa de gesso(90)', '3.095'],
            ['LWo [B]ETICS (6) + BTérmico (24) + Estuque-[B]ETICS (6) + BTérmico (24) + Estuque(90)', '3.095']
        ];

        document.getElementById('joints').innerHTML = joints.map(([lib, len], i) => {
            const ref = 'Z01_S01_J' + String(i + 1).padStart(2, '0');
            return `<tr class="${i === 0 ? 'selected' : ''}"><td>${ref}</td><td>${lib}</td><td>${len} m</td><td><input type="checkbox" aria-label="Revisto ${ref}" checked></td></tr>`;
        }).join('');
    </script>
</body>
</html>
```
FILE: styles.css
```css
* {
    box-sizing: border-box;
}

body {
    display: flex;
    flex-direction: column;
    height: 100vh;
    margin: 0;
    overflow: hidden;
    border-bottom: 1px solid #000;
    background: #f0f0f0;
    color: #000;
    font-family: "Noto Sans", "Open Sans", sans-serif;
    font-size: 11px;
    line-height: 15px;
}

button, input, select {
    font: inherit;
    color: inherit;
}

button {
    display: flex;
    align-items: center;
    justify-content: center;
    padding: 0;
    border: none;
    background: none;
}

a {
    color: inherit;
    text-decoration: none;
}

h1, h2, p, ul {
    margin: 0;
    padding: 0;
    font-size: inherit;
    font-weight: normal;
    list-style: none;
}

svg {
    flex: none;
    display: block;
}

.sprite {
    position: absolute;
    width: 0;
    height: 0;
}

.vline {
    width: 1px;
    align-self: stretch;
    background: #a0a0a0;
}

/* Title bar and tabs */
.top {
    display: grid;
    grid-template-columns: 47px 1fr;
    grid-template-rows: 26px 24px;
    color: #2b2b2b;
}

.logo {
    grid-row: span 2;
    padding-bottom: 2px;
    background: #f6f6f6;
    border-right: 1px solid #d0d0d0;
    border-bottom: 1px solid #d0d0d0;
}

.titlebar {
    display: flex;
    background: #185fab;
    color: #fff;
}

.quick {
    display: flex;
    align-items: center;
    width: 183px;
    background: #f6f6f6;
    color: #444;
}

.quick button {
    width: 26px;
    height: 26px;
}

.quick .redo {
    color: #a0a0a0;
    transform: scaleX(-1);
}

.title {
    flex: 1;
    padding-right: 16px;
    line-height: 26px;
    text-align: center;
}

.session {
    gap: 4px;
}

.winbtns {
    display: flex;
}

.winbtns button {
    width: 48px;
}

.tabs {
    display: flex;
    background: #d8d8d8;
}

.tabs a {
    padding: 2px 13px;
    line-height: 18px;
}

.tabs a.active {
    background: #f6f6f6;
}

.tools {
    display: flex;
    margin-left: auto;
}

.tools button {
    width: 28px;
    margin: 1px 0;
}

.tools button:first-child {
    width: 36px;
    border: solid #a0a0a0;
    border-width: 0 1px;
}

/* Ribbon */
.ribbon {
    display: flex;
    height: 94px;
    padding: 2px 0;
    background: #f6f6f6;
    color: #2b2b2b;
}

.group {
    display: flex;
    flex-direction: column;
    border-right: 1px solid #acacac;
}

.group.last {
    margin-left: auto;
    border-left: 1px solid #acacac;
}

.group p {
    margin-top: auto;
    line-height: 12px;
    text-align: center;
}

.items {
    display: flex;
    height: 76px;
}

.big {
    flex-direction: column;
    justify-content: flex-start;
    min-width: 46px;
    padding: 2px 3px 0;
}

.big svg {
    width: 32px;
    height: 32px;
    margin-bottom: 3px;
}

.big.wide {
    min-width: 80px;
}

.units .big {
    padding: 2px 4px 0;
}

.units .wide {
    min-width: 84px;
}

.roomy .big {
    padding: 2px 5px 0;
}

.big:disabled, .small:disabled {
    color: #a9a9a9;
}

.rule {
    width: 1px;
    margin: 0 2px;
    background: #acacac;
}

.stack {
    display: flex;
    flex-direction: column;
    justify-content: space-between;
    padding: 3px 6px;
}

.small {
    gap: 6px;
    min-height: 18px;
    justify-content: flex-start;
    align-items: flex-start;
    text-align: left;
}

/* Docked panels */
.work {
    display: flex;
    flex: 1;
    min-height: 0;
}

.dock-head {
    display: flex;
    justify-content: space-between;
    height: 20px;
    padding: 0 4px 0 3px;
    background: #d8d8d8;
    line-height: 20px;
}

.project {
    display: flex;
    flex-direction: column;
    width: 524px;
    background: #fff;
}

.tree {
    flex: 1;
    overflow: hidden;
}

.tree li:not(:last-child) {
    background: linear-gradient(#808080 50%, transparent 50%) 12px 0 / 1px 2px repeat-y;
}

.tree ul ul {
    margin-left: 21px;
}

.row {
    display: flex;
    align-items: center;
    height: 18px;
}

.row.root {
    padding-left: 3px;
}

.branch {
    flex: none;
    width: 24px;
    height: 18px;
    padding: 5px 0 0 8px;
    background: linear-gradient(90deg, #fff 12px, transparent 12px) 0 10px / 24px 1px no-repeat,
        linear-gradient(90deg, #808080 50%, transparent 50%) 0 10px / 2px 1px repeat-x;
}

.tree li:last-child > .row .branch {
    background: linear-gradient(90deg, #fff 12px, transparent 12px) 0 10px / 24px 1px no-repeat,
        linear-gradient(90deg, #808080 50%, transparent 50%) 0 10px / 2px 1px repeat-x,
        linear-gradient(#fff, #fff) 12px 11px / 1px 7px no-repeat,
        linear-gradient(#808080 50%, transparent 50%) 12px 0 / 1px 2px repeat-y;
}

.expander {
    width: 9px;
    height: 9px;
    border: 1px solid #919191;
    background: linear-gradient(#3c5aa0, #3c5aa0) 1px 3px / 5px 1px no-repeat, #f4f4f4;
}

.expander.plus {
    background: linear-gradient(#3c5aa0, #3c5aa0) 1px 3px / 5px 1px no-repeat,
        linear-gradient(#3c5aa0, #3c5aa0) 3px 1px / 1px 5px no-repeat, #f4f4f4;
}

.ticon {
    margin-right: 5px;
}

.ticon[width="18"] {
    margin-right: 3px;
}

.row a {
    padding: 0 2px;
    line-height: 18px;
}

.row a.selected {
    background: #efefef;
}

.vsplit, .hsplit {
    display: flex;
    align-items: center;
    justify-content: center;
    gap: 2px;
}

.vsplit {
    flex-direction: column;
    width: 8px;
}

.vsplit i, .hsplit i {
    width: 2px;
    height: 2px;
    background: #b4b4b4;
}

.data {
    display: flex;
    flex: 1;
    flex-direction: column;
    min-width: 0;
}

.tabstrip {
    display: flex;
    height: 17px;
    margin-bottom: -1px;
}

/* grey outer shape with a lighter one inset by a pixel */
.tab {
    position: relative;
    z-index: 0;
    padding: 1px 23px 0 22px;
    background: #c4c4c4;
    clip-path: polygon(16px 0, calc(100% - 16px) 0, 100% 100%, 0 100%);
}

.tab::before {
    content: "";
    position: absolute;
    inset: 1px 1px 0;
    z-index: -1;
    background: #e4e4e4;
    clip-path: polygon(16px 0, calc(100% - 16px) 0, 100% 100%, 0 100%);
}

.data-body {
    display: flex;
    flex: 1;
    flex-direction: column;
    min-height: 0;
    padding: 9px 9px 10px;
    border: 1px solid #c4c4c4;
    background: #e4e4e4;
}

.toolbar {
    display: flex;
    align-items: center;
    height: 24px;
}

.toolbar button {
    width: 23px;
    height: 20px;
}

.toolbar .vline {
    margin: 2px 4px 2px 3px;
}

.list {
    flex: 367;
    min-height: 0;
    padding: 1px;
    overflow: hidden;
    border: 1px solid #c4c4c4;
    background: #fff;
}

.list table {
    width: 100%;
    table-layout: fixed;
    border-collapse: collapse;
}

.c-ref { width: 121px; }
.c-len { width: 133px; }
.c-rev { width: 96px; }

.list th {
    height: 22px;
    padding: 0 6px;
    background: linear-gradient(#d4d4d4, #d4d4d4) right / 1px 16px no-repeat, #f1f1f1;
    font-weight: normal;
    text-align: left;
}

.list td {
    height: 20px;
    padding: 0 6px;
    border-right: 1px solid #f0f0f0;
    border-bottom: 1px solid #f0f0f0;
    white-space: nowrap;
}

.list th:nth-child(n+3), .list td:nth-child(n+3) {
    text-align: center;
}

.list .selected td {
    background: #cce8ff;
}

.list input {
    appearance: none;
    display: block;
    width: 11px;
    height: 11px;
    margin: 0 auto;
    border: 1px solid #555;
    background: #fff;
}

.list input:checked::before {
    content: "";
    display: block;
    width: 7px;
    height: 7px;
    margin: 1px;
    background: #000;
    clip-path: polygon(0 35%, 35% 60%, 100% 0, 100% 40%, 35% 100%, 0 80%);
}

.hsplit {
    height: 9px;
}

/* Detail form */
.detail {
    display: grid;
    flex: 575;
    grid-template-columns: 81px 1fr;
    grid-template-rows: 22px 22px 25px auto;
    align-content: start;
    align-items: center;
    row-gap: 6px;
    padding: 8px 11px;
    border: 1px solid #c4c4c4;
}

.field {
    display: flex;
    align-items: center;
}

.field button {
    width: 24px;
}

.unit {
    padding-left: 7px;
}

.field input {
    width: 62px;
    height: 22px;
    padding: 0 5px;
    border: 1px solid #f0f0f0;
    border-bottom-color: #808080;
    background: #fff;
    text-align: right;
}

.combo {
    display: flex;
    align-items: center;
    width: 604px;
    padding-right: 6px;
    border: 1px solid #8a8a8a;
    border-radius: 2px;
    background: #fff;
}

.combo::after {
    content: "";
    width: 5px;
    height: 5px;
    margin-top: -3px;
    border: solid #444;
    border-width: 0 1px 1px 0;
    transform: rotate(45deg);
}

.combo select {
    appearance: none;
    flex: 1;
    min-width: 0;
    height: 23px;
    margin-right: 12px;
    padding: 0 0 0 5px;
    border: none;
    background: none;
    text-overflow: ellipsis;
}

.elements {
    grid-column: 2;
    justify-self: start;
    padding: 1px;
    border: 1px solid #a0a0a0;
    background: #fff;
}

.elements table {
    border-collapse: collapse;
}

.elements th, .elements td {
    padding: 0;
    border: solid #c4c4c4;
    border-width: 0 1px 1px 0;
    font-weight: normal;
    text-align: center;
}

.elements th:last-child, .elements td:last-child {
    border-right: none;
}

.elements tr:last-child td {
    border-bottom: none;
}

.elements th {
    height: 24px;
    background: #f1f1f1;
}

.elements td {
    height: 34px;
}

.elements tbody tr:last-child td {
    background: #f7f7f7;
}

.elements th:last-child {
    padding-right: 28px;
}

.elements .left, .elements .type {
    width: 133px;
    padding-left: 3px;
    text-align: left;
}

.elements tbody .num {
    width: 18px;
    padding-left: 3px;
    background: #f1f1f1;
}

.sw {
    width: 25px;
}

.angle {
    width: 82px;
}

.swatch {
    display: block;
    width: 16px;
    height: 16px;
    margin: 0 auto;
    border: 1px solid;
}

.swatch.wall {
    background: #d66b00;
    border-color: #a03a00;
}

.swatch.slab {
    background: #00a8a8;
    border-color: #006c6c;
}

.pick {
    display: flex;
    align-items: center;
    gap: 11px;
    padding: 0 8px 0 4px;
}

.elem {
    width: 123px;
    height: 25px;
    border: 1px solid #d0d0d0;
    border-radius: 4px;
    background: #fdfdfd;
}

/* 3D window */
.view3d {
    position: absolute;
    top: 501px;
    right: 24px;
    display: flex;
    flex-direction: column;
    width: 574px;
    height: 617px;
    padding: 0 4px 4px;
    border: 1px solid #003a80;
    background: #185fab;
}

.view-title {
    display: flex;
    align-items: center;
    height: 30px;
    padding-top: 3px;
    color: #fff;
}

.view-title h2 {
    flex: 1;
    padding-left: 8px;
}

.view-title button {
    width: 48px;
    height: 26px;
}

.view-tools {
    display: flex;
    align-items: center;
    height: 25px;
    background: #f0f0f0;
}

.view-tools button {
    width: 24px;
    height: 24px;
}

.view-tools .nav {
    width: 25px;
}

.view-tools svg {
    width: 18px;
    height: 18px;
}

.view-tools .on {
    border: 1px solid #90b4c4;
    background: #cce8f4;
}

.view-tools .vline {
    margin: 0 3px 0 2px;
    background: #c0c0c0;
}

.tag {
    font-size: 8px;
    font-weight: bold;
}

.scene {
    flex: 1;
    width: 100%;
    min-height: 0;
}

.axes {
    font-size: 15px;
    font-weight: bold;
}
```
